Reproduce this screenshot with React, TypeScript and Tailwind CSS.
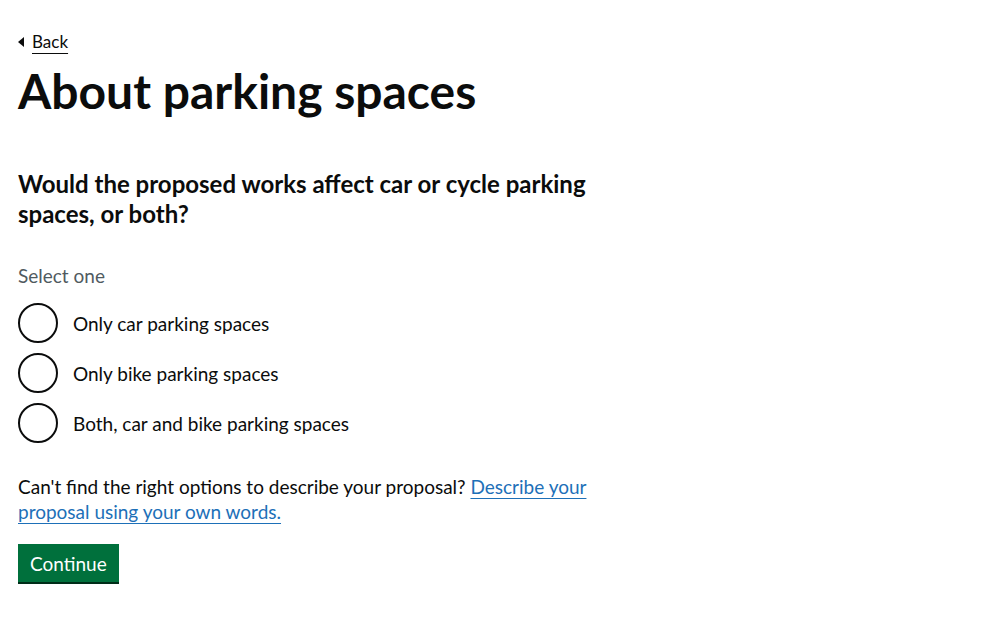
const options = [
  'Only car parking spaces',
  'Only bike parking spaces',
  'Both, car and bike parking spaces',
]

export default function App() {
  return (
    <div className="min-h-screen bg-white px-[18px] text-[#0b0c0c]" style={{ fontFamily: 'Lato, "Liberation Sans", Arial, sans-serif' }}>
      <div className="w-[610px]">
        {/* Back link */}
        <div className="pt-[29px]">
          <a href="#" className="relative inline-flex items-center gap-[8px] text-[17px] leading-[20px] text-[#0b0c0c] underline underline-offset-[5px] decoration-1">
            <span className="inline-block h-0 w-0 border-y-[5px] border-r-[6px] border-y-transparent border-r-[#0b0c0c]" />
            Back
          </a>
        </div>

        <h1 className="mt-[13px] text-[48px] font-bold leading-[50px]">About parking spaces</h1>

        <h2 className="mt-[53px] text-[24px] font-bold leading-[30px]">
          Would the proposed works affect car or cycle parking spaces, or both?
        </h2>

        <div className="mt-[34px] text-[19px] leading-[25px] text-[#505a5f]">Select one</div>

        <div className="mt-[15px] flex flex-col gap-[10px]">
          {options.map((o) => (
            <label key={o} className="flex items-center gap-[15px]">
              <span className="h-[40px] w-[40px] shrink-0 rounded-full border-2 border-[#0b0c0c]" />
              <span className="text-[19px] leading-[25px]">{o}</span>
            </label>
          ))}
        </div>

        <p className="mt-[31px] text-[19px] leading-[25px]">
          Can't find the right options to describe your proposal?{' '}
          <a href="#" className="text-[#1d70b8] underline underline-offset-[4px] decoration-1">
            Describe your proposal using your own words.
          </a>
        </p>

        <button className="mt-[20px] bg-[#00703c] px-[12px] pb-[7px] pt-[8px] text-[19px] leading-[23px] text-white shadow-[0_2px_0_#002d18]">
          Continue
        </button>
      </div>
    </div>
  )
}
